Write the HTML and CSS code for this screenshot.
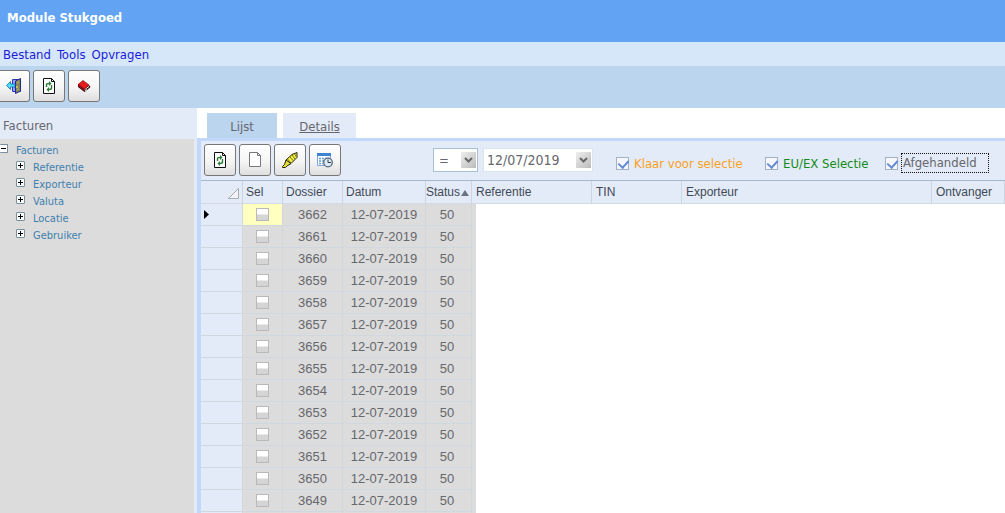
FILE: index.html
```html
<!DOCTYPE html>
<html lang="nl">
<head>
<meta charset="utf-8">
<title>Module Stukgoed</title>
<link rel="stylesheet" href="styles.css">
</head>
<body>
<svg class="defs" aria-hidden="true">
  <symbol id="refresh" viewBox="0 0 16 16">
    <path d="M2.500 .5h8l3 3v12h-11z" fill="#fff" stroke="#111"/>
    <path d="M10.500 .5v3h3" fill="none" stroke="#111"/>
    <path d="M5.500 9V6.500Q5.500 5.500 8 5.500M10.500 7v3Q10.500 11.500 8 11.500" fill="none" stroke="#2c7d35" stroke-width="1.400"/>
    <path d="M8 3L10.500 5.500 8 8zM8 9v5L5.500 11.500z" fill="#2c7d35"/>
  </symbol>
</svg>
<header class="title"><h1>Module Stukgoed</h1></header>
<nav class="menu"><a href="#">Bestand</a><a href="#">Tools</a><a href="#">Opvragen</a></nav>
<div class="toolbar">
  <button class="tool" aria-label="Afsluiten"><svg class="icon" viewBox="0 0 16 16">
    <path d="M6.500 1.500h8v12h-8z" fill="#8ba6ee" stroke="#2a35b8"/>
    <path d="M9.500 3l5-2.500v12.500l-5 2.500z" fill="#88875a" stroke="#20259c"/>
    <path d="M11 5l2-1M11 12l2-1" stroke="#b5b785"/><path d="M11 8v2" stroke="#fff46a"/>
    <path d="M.5 7.500L4.500 3.500V6h4.500v3H4.500v2.500z" fill="#4ddcf8" stroke="#1766b8" stroke-width=".8"/></svg></button>
  <button class="tool" aria-label="Vernieuwen"><svg class="icon"><use href="#refresh"/></svg></button>
  <button class="tool" aria-label="Handleiding"><svg class="icon" viewBox="0 0 16 16">
    <path d="M2 6v3l6.500 5 2-1.500 4-3.500-1-1.500z" fill="#32090c"/>
    <path d="M8.500 11.500L13 8.500M9 13l2-1.500" fill="none" stroke="#eee"/>
    <path d="M2 6.500L7 2.500l6 4.500-4.500 4z" fill="#e51b20" stroke="#8b1014" stroke-width=".7"/>
    <path d="M2 7.500L8.500 12.500" stroke="#b01015"/></svg></button>
</div>
<main class="workspace">
  <aside class="sidebar">
    <h2>Facturen</h2>
    <ul class="tree">
      <li><button class="toggle minus" aria-label="Facturen inklappen"></button><a href="#">Facturen</a>
        <ul class="branch">
          <li><button class="toggle" aria-label="Referentie uitklappen"></button><a href="#">Referentie</a></li>
          <li><button class="toggle" aria-label="Exporteur uitklappen"></button><a href="#">Exporteur</a></li>
          <li><button class="toggle" aria-label="Valuta uitklappen"></button><a href="#">Valuta</a></li>
          <li><button class="toggle" aria-label="Locatie uitklappen"></button><a href="#">Locatie</a></li>
          <li><button class="toggle" aria-label="Gebruiker uitklappen"></button><a href="#">Gebruiker</a></li>
        </ul>
      </li>
    </ul>
  </aside>
  <section class="content">
    <nav class="tabs"><a class="tab active" href="#">Lijst</a><a class="tab" href="#">Details</a></nav>
    <div class="panel">
      <div class="filters">
        <div class="tools">
          <button class="tool" aria-label="Vernieuwen"><svg class="icon"><use href="#refresh"/></svg></button>
          <button class="tool" aria-label="Nieuw"><svg class="icon" viewBox="0 0 16 16"><path d="M2.500 .5h8l3 3v11h-11zM10.500 .5v3h3" fill="#fff" stroke="#777"/></svg></button>
          <button class="tool" aria-label="Markeren"><svg class="icon" viewBox="0 0 16 16">
            <path d="M4 8L10 2.500 15 .5v5L9 11.500 6 12.500z" fill="#f4ef45" stroke="#27270c"/>
            <path d="M5.500 7l3.500 4M8 5l3.500 4M10 3l3 4M12.500 2l2 3" stroke="#77751a" fill="none"/>
            <path d="M4 8L2.500 12.500l-2 2v1h3l1.500-1.500 4-2.500z" fill="#e5df38" stroke="#27270c"/></svg></button>
          <button class="tool" aria-label="Planning"><svg class="icon" viewBox="0 0 16 16">
            <path d="M.5 1.500h13v12H.5z" fill="#f5faff" stroke="#7fa9d8"/><path d="M0 1h14v3H0z" fill="#3d85d0"/>
            <path d="M2 6.500h10M2 9h6M2 11.500h4" stroke="#6b9bd4" stroke-width="1.500" stroke-dasharray="2 1"/>
            <circle cx="11" cy="10.500" r="4.300" fill="#dce9f3" stroke="#596b7b" stroke-width="1.300"/><path d="M11 7.500v3h3" fill="none" stroke="#345"/></svg></button>
        </div>
        <span class="picker operator"><select aria-label="Operator"><option>=</option></select><svg class="arrow" viewBox="0 0 15 15"><path d="M4 5.500l3.500 3.500L11 5.500"/></svg></span>
        <span class="picker date"><select aria-label="Datum"><option>12/07/2019</option></select><svg class="arrow" viewBox="0 0 15 15"><path d="M4 5.500l3.500 3.500L11 5.500"/></svg></span>
        <label class="check orange"><input type="checkbox" checked><span>Klaar voor selectie</span></label>
        <label class="check green"><input type="checkbox" checked><span>EU/EX Selectie</span></label>
        <label class="check focused"><input type="checkbox" checked><span>Afgehandeld</span></label>
      </div>
      <table class="grid">
        <colgroup><col class="c-mark"><col class="c-sel"><col class="c-dossier"><col class="c-date"><col class="c-status"><col class="c-ref"><col class="c-tin"><col class="c-exp"><col></colgroup>
        <thead><tr><th class="corner"><svg viewBox="0 0 12 12"><path d="M11.500 .5v11H.5z"/></svg></th><th>Sel</th><th>Dossier</th><th>Datum</th><th class="status">Status<svg viewBox="0 0 8 6"><path d="M4 0l4 6H0z"/></svg></th><th>Referentie</th><th>TIN</th><th>Exporteur</th><th>Ontvanger</th></tr></thead>
        <tbody id="rows"></tbody>
      </table>
    </div>
  </section>
</main>
<script src="grid.js"></script>
</body>
</html>
```
FILE: grid.js
```js
const body = document.getElementById('rows');
for (let number = 3662; number >= 3649; number--) {
  const row = body.insertRow();
  const current = number === 3662;
  row.innerHTML = `<td class="mark">${current ? '<svg viewBox="0 0 5 9"><path d="M0 0l5 4.500L0 9z"/></svg>' : ''}</td>
    <td class="sel ${current ? 'current' : ''}"><input type="checkbox" aria-label="Selecteer ${number}"></td>
    <td>${number}</td><td>12-07-2019</td><td class="code">50</td>`;
  if (current) row.insertAdjacentHTML('beforeend', '<td class="blank" colspan="4" rowspan="15"></td>');
}
body.insertRow().innerHTML = '<td class="mark"></td><td></td><td></td><td></td><td></td>';
```
FILE: styles.css
```css
* { box-sizing: border-box; }
body { margin: 0; height: 100vh; overflow: hidden; display: flex; flex-direction: column; font: 13px "DejaVu Sans Condensed", Tahoma, "DejaVu Sans", sans-serif; color: #66676c; }
a { color: inherit; text-decoration: none; }
button, select, input { margin: 0; font: inherit; color: inherit; }
.defs { position: absolute; width: 0; height: 0; }
.title { flex: none; height: 42px; padding: 10px 7px; background: #62a4f3; }
.title h1 { margin: 0; font-size: 13px; line-height: 16px; color: #fff; }
.menu { flex: none; height: 24px; padding: 0 3px; display: flex; gap: 6px; line-height: 25px; background: #d5e7f8; color: #1c1cd8; }
.toolbar { flex: none; height: 42px; padding: 4px 0; display: flex; gap: 3px; background: #bbd5ee; }
.toolbar .tool:first-child { width: 30px; border-left: 0; border-radius: 0 3px 3px 0; padding-right: 2px; }
.tool { width: 32px; height: 32px; padding: 0; display: flex; align-items: center; justify-content: center; border: 1px solid #777; border-radius: 3px; background: linear-gradient(#fff, #f5f5f5 55%, #dedede); }
.icon { flex: none; width: 16px; height: 16px; }
.workspace { flex: 1; min-height: 0; display: flex; }
.sidebar { flex: none; width: 197px; border-right: 3px solid #e4ebf8; background: #dcdcdc; }
.sidebar h2 { margin: 0; height: 31px; padding: 2px 3px 0; font-weight: normal; font-size: 13px; line-height: 31px; background: #e4ebf8; }
.tree, .branch { list-style: none; margin: 0; padding: 0; }
.tree { padding-top: 3px; font: 11px/17px "DejaVu Sans Condensed", Tahoma, sans-serif; color: #417fae; }
.tree > li > a { padding-left: 8px; }
.branch { margin-left: 16px; }
.branch a { padding-left: 8px; }
.toggle { width: 9px; height: 9px; padding: 0; border: 1px solid #78909c; border-radius: 1px; vertical-align: 2px; background: linear-gradient(#000, #000) center / 5px 1px no-repeat, linear-gradient(#000, #000) center / 1px 5px no-repeat, #fff; }
.toggle.minus { width: 8px; border-left: 0; background: linear-gradient(#000, #000) center / 5px 1px no-repeat, #fff; }
.content { flex: 1; min-width: 0; display: flex; flex-direction: column; background: #fff; }
.tabs { height: 30px; flex: none; padding: 5px 10px 0; display: flex; gap: 6px; }
.tab { width: 73px; text-align: center; line-height: 27px; text-decoration: underline; background: #e4ebf8; }
.tab.active { width: 70px; text-decoration: none; background: #bbd5ee; }
.panel { flex: 1; min-height: 0; overflow: hidden; border: solid #c2d8fb; border-width: 3px 0 0 4px; }
.filters { height: 39px; padding-left: 3px; display: flex; align-items: flex-start; background: #e4ebf8; white-space: nowrap; }
.tools { display: flex; gap: 3px; padding-top: 3px; margin-right: 92px; }
.picker { position: relative; height: 24px; margin-top: 7px; }
.operator { width: 45px; margin-right: 5px; }
.date { width: 110px; margin-right: 23px; }
.picker select { appearance: none; width: 100%; height: 24px; padding: 0 0 0 5px; border: 1px solid #a9bfd2; border-radius: 0; background: #fff; }
.date select { padding-left: 3px; border-color: #dde4ee; font-size: 14px; }
.arrow { position: absolute; right: 2px; top: 4px; width: 15px; height: 16px; background: linear-gradient(135deg, #eee, #bbb); pointer-events: none; }
.arrow path { fill: none; stroke: #666; stroke-width: 2; }
.check { display: flex; align-items: center; height: 20px; margin-top: 12px; gap: 5px; }
.check input { appearance: none; flex: none; width: 13px; height: 13px; border: 1px solid #a5b1bf; background: #f4f8fd; }
.check input:checked::before { content: ""; display: block; width: 5px; height: 8px; margin: 0 0 0 3px; border: solid #6489d6; border-width: 0 2px 2px 0; transform: rotate(42deg); }
.orange { width: 149px; color: #f9a11b; }
.green { width: 120px; color: #118a20; }
.focused { gap: 4px; }
.focused span { width: 86px; line-height: 18px; padding-left: 1px; outline: 1px dotted #111; }
.grid { width: 100%; table-layout: fixed; border-collapse: separate; border-spacing: 0; border-top: 1px solid #a8b8cb; font-family: "Liberation Sans", Arial, sans-serif; }
.c-mark { width: 42px; }
.c-sel { width: 40px; }
.c-dossier { width: 60px; }
.c-date { width: 83px; }
.c-status { width: 46px; }
.c-ref { width: 120px; }
.c-tin { width: 90px; }
.c-exp { width: 250px; }
.grid th { height: 23px; padding: 0 0 0 3px; text-align: left; font-size: 12px; font-weight: normal; white-space: nowrap; color: #414955; background: #e4ebf8; border-right: 1px solid #ccd6e2; border-bottom: 1px solid #d4d9e2; }
.grid th:nth-child(n+6) { padding-left: 4px; }
.grid .status { padding-left: 0; }
.status svg { width: 8px; height: 6px; margin-left: 1px; fill: #6c747d; }
.grid .corner { text-align: right; padding: 6px 3px 0 0; }
.corner svg { width: 11px; height: 11px; fill: #f4f4f4; stroke: #9aa3ac; }
.grid td { height: 22px; padding: 0 0 1px; font-size: 13px; line-height: 19px; text-align: center; background: #dcdcdc; border-right: 1px solid #d2d7dc; border-bottom: 1px solid #d0d7df; }
.grid .mark { padding-left: 3px; text-align: left; background: #e4ebf8; }
.mark svg { width: 5px; height: 9px; }
.grid .current { background: #ffffc0; }
.sel input { appearance: none; width: 13px; height: 13px; border: 1px solid #b9b9b9; vertical-align: -2px; background: linear-gradient(#fff 45%, #d5d5d5 55%); }
.grid .code { padding-right: 3px; }
.grid .blank { background: #fff; border: 0; border-left: 4px solid #dcdcdc; }
```
